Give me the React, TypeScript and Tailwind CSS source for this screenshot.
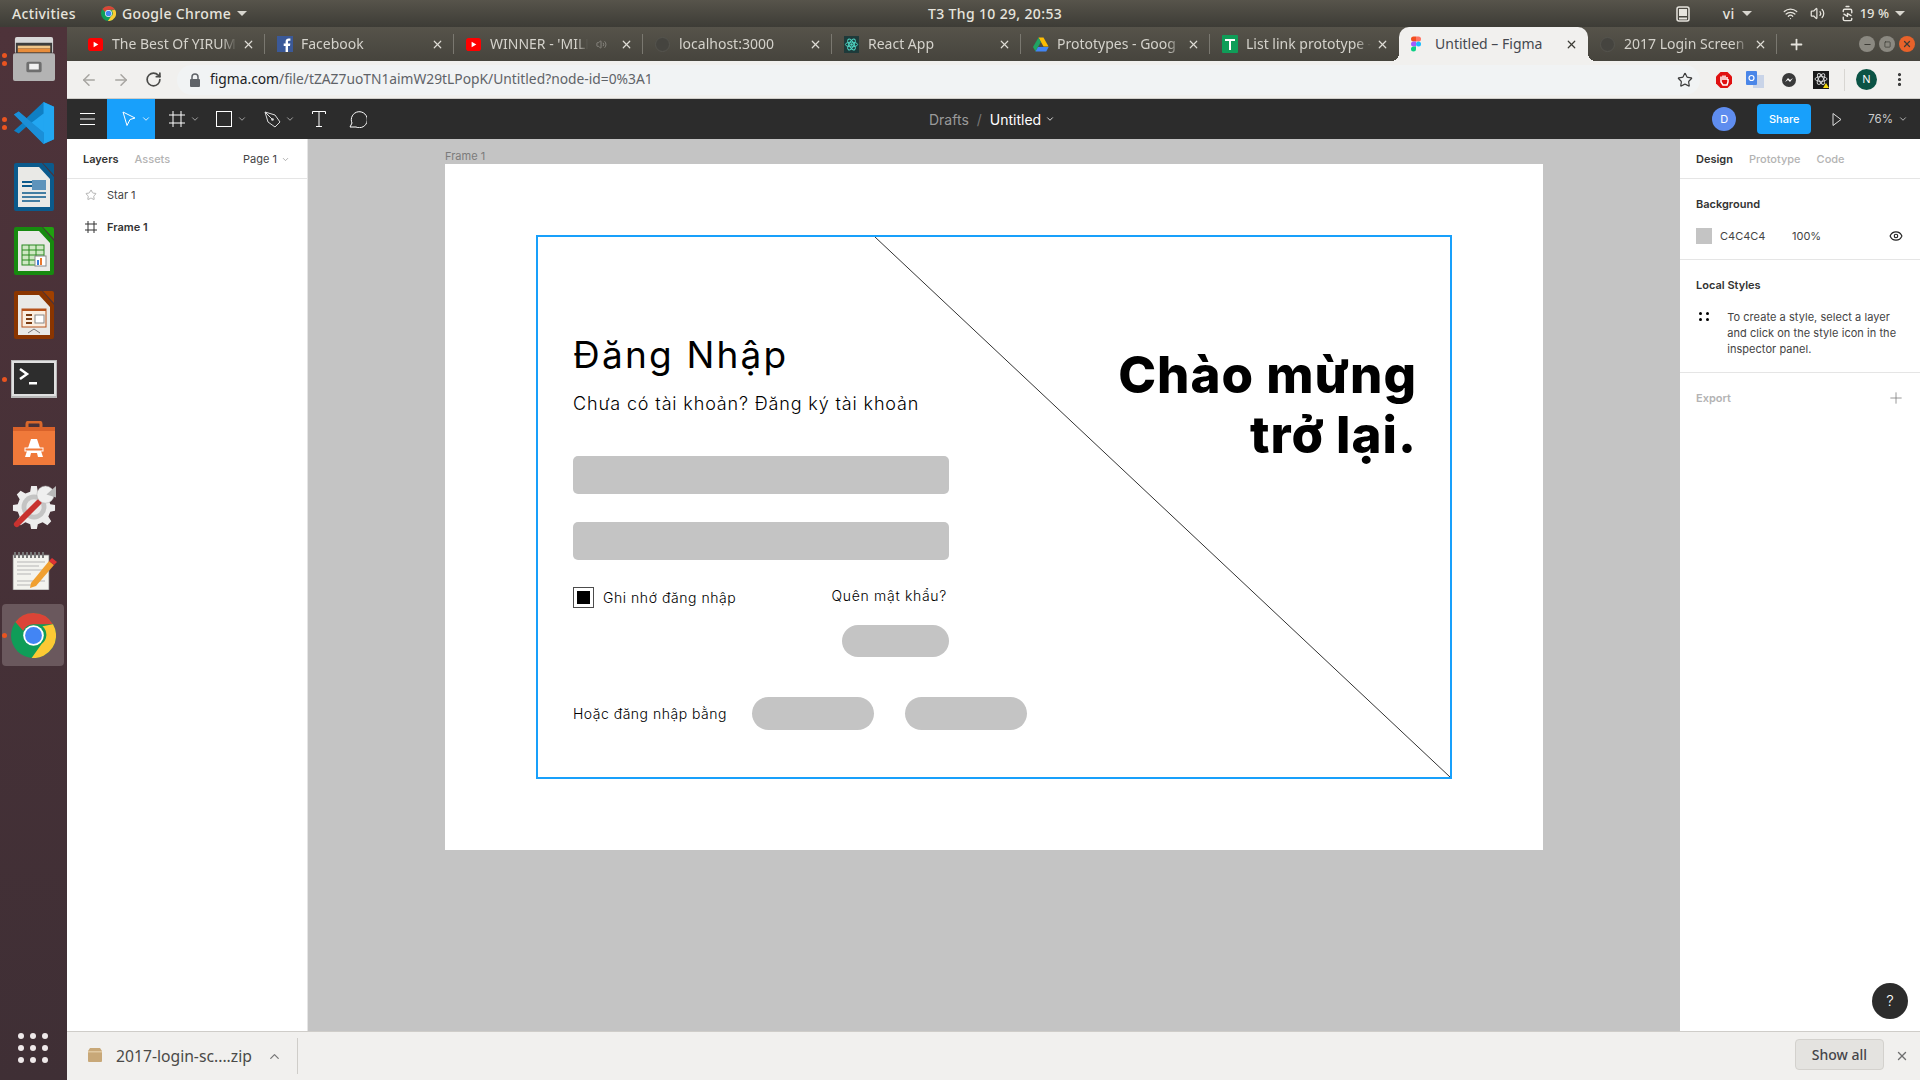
import { ChevronDown, ChevronUp, Eye, Minus, Plus, RotateCw, Star, Volume2, Wifi, X, ArrowLeft, ArrowRight, Square, MoreVertical, BatteryCharging } from 'lucide-react'
import type { ReactNode } from 'react'

const ubuntu = 'font-["Noto_Sans",sans-serif]'

function ChromeLogo({ size = 16 }: { size?: number }) {
  return (
    <svg width={size} height={size} viewBox="0 0 48 48">
      <circle cx="24" cy="24" r="24" fill="#0f9d58" />
      <path d="M24 0a24 24 0 0 1 20.8 12H24a12 12 0 0 0-11 7L4.6 9.6A24 24 0 0 1 24 0z" fill="#db4437" />
      <path d="M44.8 12A24 24 0 0 1 22 48l10.6-15A12 12 0 0 0 33.500 14z" fill="#fcc934" />
      <circle cx="24" cy="24" r="11" fill="#fff" />
      <circle cx="24" cy="24" r="9" fill="#4285f4" />
    </svg>
  )
}

function YouTubeIcon() {
  return (
    <svg width="15" height="15" viewBox="0 0 16 16">
      <rect x="0" y="1" width="16" height="14" rx="3" fill="#f00" />
      <path d="M6 5l5 3-5 3z" fill="#fff" />
    </svg>
  )
}

function FacebookIcon() {
  return (
    <svg width="16" height="16" viewBox="0 0 16 16">
      <rect width="16" height="16" fill="#3b5998" />
      <path d="M11 16V10h2l.3-2.500H11V6c0-.7.3-1.200 1.300-1.200h1.100V2.600C13 2.500 12.400 2.500 11.700 2.500 10 2.500 8.600 3.500 8.600 5.600v1.900H6.700V10h1.900v6z" fill="#fff" />
    </svg>
  )
}

function GhostGlobe() {
  return <span className="block w-[15px] h-[15px] rounded-full bg-[#45443f] border border-[#55544e]" />
}

function ReactFav() {
  return (
    <svg width="15" height="17" viewBox="0 0 16 18">
      <rect width="16" height="18" fill="#1d3a3a" />
      <g fill="none" stroke="#4fd6c4" strokeWidth="1">
        <ellipse cx="8" cy="9" rx="6.500" ry="2.500" />
        <ellipse cx="8" cy="9" rx="6.500" ry="2.500" transform="rotate(60 8 9)" />
        <ellipse cx="8" cy="9" rx="6.500" ry="2.500" transform="rotate(120 8 9)" />
      </g>
      <circle cx="8" cy="9" r="1.300" fill="#4fd6c4" />
    </svg>
  )
}

function DriveIcon() {
  return (
    <svg width="16" height="15" viewBox="0 0 16 14">
      <path d="M5.500 0h5l5 9h-5z" fill="#fbbc04" />
      <path d="M5.500 0L0 9.500 2.500 14l5.300-9.500z" fill="#1fa463" />
      <path d="M2.500 14h10.700l2.500-4.500H5z" fill="#4285f4" />
    </svg>
  )
}

function SheetsIcon() {
  return (
    <svg width="16" height="18" viewBox="0 0 16 18">
      <rect width="16" height="18" rx="1" fill="#0f9d58" />
      <path d="M3 4h10v2H9v9H7V6H3z" fill="#fff" />
    </svg>
  )
}

function FigmaIcon() {
  return (
    <svg width="10" height="16" viewBox="0 0 10 15">
      <path d="M0 2.500A2.500 2.500 0 0 1 2.500 0H5v5H2.500A2.500 2.500 0 0 1 0 2.500z" fill="#f24e1e" />
      <path d="M5 0h2.500a2.500 2.500 0 0 1 0 5H5z" fill="#ff7262" />
      <path d="M0 7.500A2.500 2.500 0 0 1 2.500 5H5v5H2.500A2.500 2.500 0 0 1 0 7.500z" fill="#a259ff" />
      <circle cx="7.500" cy="7.500" r="2.500" fill="#1abcfe" />
      <path d="M0 12.500A2.500 2.500 0 0 1 2.500 10H5v2.500a2.500 2.500 0 0 1-5 0z" fill="#0acf83" />
    </svg>
  )
}

function FileCabinet() {
  return (
    <svg width="42" height="44" viewBox="0 0 44 46">
      <rect x="2" y="0" width="40" height="17" rx="2" fill="#d8d8d8" />
      <rect x="3" y="6" width="38" height="12" fill="#3d3d3d" />
      <rect x="5" y="9" width="34" height="3" fill="#f0c68a" />
      <rect x="5" y="12" width="34" height="4" fill="#e88c3a" />
      <rect x="0" y="17" width="44" height="29" rx="2" fill="#b3b3b3" />
      <rect x="14" y="26" width="16" height="11" rx="2" fill="#6e6e6e" />
      <rect x="17" y="28" width="10" height="6" fill="#f2f2f2" />
    </svg>
  )
}

function VsCode() {
  return (
    <svg width="42" height="42" viewBox="0 0 44 44">
      <path d="M32 0l11 5v34l-11 5L14 26l-8 7-5-3 9-8-9-9 5-3 8 7z" fill="#0f7fc4" />
      <path d="M32 0l11 5v34l-11 5zM32 12L19 22l13 10z" fill="#22a7f2" fillRule="evenodd" />
      <path d="M1 13l5-3 26 22v12L14 26z" fill="#1b8fd8" />
    </svg>
  )
}

function OfficeDoc({ edge, corner, children }: { edge: string; corner: string; children: ReactNode }) {
  return (
    <svg width="40" height="48" viewBox="0 0 40 48">
      <path d="M2 0h26l12 14v32a2 2 0 0 1-2 2H2a2 2 0 0 1-2-2V2a2 2 0 0 1 2-2z" fill={edge} />
      <path d="M29 0h9a2 2 0 0 1 2 2v10z" fill={corner} />
      <path d="M4 4h21l11 12v28H4z" fill="#e9e9e6" />
      {children}
    </svg>
  )
}

function Terminal() {
  return (
    <svg width="46" height="38" viewBox="0 0 46 38">
      <rect width="46" height="38" fill="#b9b9b9" />
      <rect x="1" y="1" width="44" height="35" fill="#e0e0e0" />
      <rect x="3" y="3" width="40" height="31" fill="#2d2d2d" />
      <path d="M9 9l7 5-7 5" fill="none" stroke="#fff" strokeWidth="2.500" />
      <rect x="18" y="22" width="8" height="2.500" fill="#fff" />
    </svg>
  )
}

function StoreBag() {
  return (
    <svg width="42" height="44" viewBox="0 0 42 44">
      <path d="M14 10V3a2 2 0 0 1 2-2h10a2 2 0 0 1 2 2v7" fill="none" stroke="#d9682c" strokeWidth="3" />
      <path d="M0 6h42v38H0z" fill="#f0793a" />
      <path d="M0 6h42v4H0z" fill="#d9622a" />
      <path d="M18 18h6l6 18h-5l-1-4h-6l-1 4h-5z" fill="#fff" />
      <rect x="12" y="27" width="18" height="3" fill="#f0793a" stroke="#fff" />
    </svg>
  )
}

function ToolsIcon() {
  return (
    <svg width="44" height="44" viewBox="0 0 46 46">
      <path d="M20 1h6l1 6 5 2 5-3 4 4-3 5 2 5 5 1v6l-5 1-2 5 3 5-4 4-5-3-5 2-1 5h-6l-1-5-5-2-5 3-4-4 3-5-2-5-5-1v-6l5-1 2-5-3-5 4-4 5 3 5-2z" fill="#ededed" />
      <circle cx="23" cy="23" r="13" fill="#c4c4c4" />
      <circle cx="23" cy="23" r="8" fill="#e8e8e8" />
      <path d="M5 41l23-23" stroke="#c8322f" strokeWidth="6" strokeLinecap="round" />
      <circle cx="35" cy="10" r="9" fill="#efefef" stroke="#aaa" strokeWidth=".5" />
      <path d="M36 10l10-9v12z" fill="#b9b9b9" />
    </svg>
  )
}

function Notepad() {
  return (
    <svg width="46" height="38" viewBox="0 0 46 38">
      <rect x="2" y="3" width="36" height="35" fill="#f3f3ee" stroke="#777" strokeWidth=".7" />
      <path d="M4 0v6M8 0v6M12 0v6M16 0v6M20 0v6M24 0v6M28 0v6M32 0v6" stroke="#777" strokeWidth="2" />
      <path d="M6 10h28M6 14h22M6 18h28M6 22h14M6 29h28M6 33h18" stroke="#b5b5b5" strokeWidth="1" />
      <path d="M20 31L38 9l5 4-18 21-6 2z" fill="#f0a030" />
      <path d="M38 9l3-3 5 4-3 3z" fill="#d33" />
    </svg>
  )
}

function DockItem({ dots = 0, active, children }: { dots?: number; active?: boolean; children: ReactNode }) {
  return (
    <div className="h-[64px] flex items-center justify-center relative">
      {active && <div className="absolute left-[2px] right-[3px] top-[1px] bottom-[1px] rounded bg-[#6a585d]" />}
      {dots > 0 && (
        <div className="absolute left-[2px] top-0 bottom-0 flex flex-col justify-center gap-[3px]">
          {Array.from({ length: dots }).map((_, i) => (
            <span key={i} className="block w-[5px] h-[5px] rounded-full bg-[#e95420]" />
          ))}
        </div>
      )}
      <div className="relative">{children}</div>
    </div>
  )
}

function Dock() {
  return (
    <aside className="w-[67px] shrink-0 flex flex-col pb-[17px] bg-gradient-to-b from-[#4e333a] to-[#3f2f35]">
      <DockItem dots={2}><FileCabinet /></DockItem>
      <DockItem dots={2}><VsCode /></DockItem>
      <DockItem>
        <OfficeDoc edge="#0b5a8c" corner="#0b5a8c">
          <rect x="8" y="18" width="10" height="2" fill="#0b5a8c" />
          <rect x="8" y="22" width="10" height="2" fill="#0b5a8c" />
          <rect x="18" y="17" width="14" height="10" fill="#5d93bb" />
          <path d="M8 30h24M8 34h24M8 38h18" stroke="#0b5a8c" strokeWidth="1.500" />
        </OfficeDoc>
      </DockItem>
      <DockItem>
        <OfficeDoc edge="#178a0f" corner="#20a010">
          <rect x="8" y="18" width="22" height="20" fill="#cfe8c4" stroke="#2a8a20" />
          <path d="M8 23h22M8 28h22M8 33h22M15 18v20M22 18v20" stroke="#2a8a20" />
          <rect x="21" y="29" width="11" height="10" fill="#fff" stroke="#888" />
          <rect x="23" y="33" width="2" height="5" fill="#3b7dd8" />
          <rect x="26" y="31" width="2" height="7" fill="#e8772e" />
        </OfficeDoc>
      </DockItem>
      <DockItem>
        <OfficeDoc edge="#8a3500" corner="#a04000">
          <rect x="8" y="18" width="24" height="18" fill="#fbeee0" stroke="#b5521a" />
          <rect x="8" y="18" width="24" height="2" fill="#b5521a" />
          <path d="M12 24h6M12 28h6M12 32h6" stroke="#7a3a10" strokeWidth="2" />
          <rect x="21" y="24" width="9" height="8" fill="#fff" stroke="#888" />
          <path d="M14 42l6-4 6 4" fill="none" stroke="#777" />
        </OfficeDoc>
      </DockItem>
      <DockItem dots={1}><Terminal /></DockItem>
      <DockItem><StoreBag /></DockItem>
      <DockItem><ToolsIcon /></DockItem>
      <DockItem><Notepad /></DockItem>
      <DockItem dots={1} active><ChromeLogo size={45} /></DockItem>
      <div className="mt-auto ml-[18px] w-[30px] grid grid-cols-3 gap-x-[6px] gap-y-[6px]">
        {Array.from({ length: 9 }).map((_, i) => (
          <span key={i} className="block w-[6px] h-[6px] rounded-full bg-[#efe9ea]" />
        ))}
      </div>
    </aside>
  )
}

function TopBar() {
  return (
    <header className={`h-[27px] shrink-0 flex items-center bg-gradient-to-b from-[#57544b] to-[#3d3c36] text-[#e6e4dd] text-[14px] font-medium tracking-[0.35px] ${ubuntu}`}>
      <span className="ml-[12px] w-[89px]">Activities</span>
      <ChromeLogo size={15} />
      <span className="ml-[6px]">Google Chrome</span>
      <span className="ml-[6px] border-x-[5px] border-x-transparent border-t-[5px] border-t-[#d8d6cf]" />
      <span className="absolute left-[928px]">T3 Thg 10 29, 20:53</span>
      <div className="ml-auto flex items-center">
        <svg width="14" height="16" viewBox="0 0 14 16">
          <rect x="1" y="1" width="12" height="14" rx="2" fill="none" stroke="#e6e4dd" strokeWidth="1.500" />
          <rect x="3" y="3" width="8" height="7" fill="#e6e4dd" />
          <rect x="3" y="11.500" width="8" height="2" fill="#e6e4dd" />
        </svg>
        <span className="ml-[33px]">vi</span>
        <span className="ml-[7px] border-x-[5px] border-x-transparent border-t-[5px] border-t-[#d8d6cf]" />
        <Wifi size={15} className="ml-[31px]" />
        <Volume2 size={15} className="ml-[12px]" />
        <BatteryCharging size={17} className="ml-[14px] -rotate-90" />
        <span className="ml-[4px] text-[13px] tracking-normal">19 %</span>
        <span className="ml-[6px] mr-[15px] border-x-[5px] border-x-transparent border-t-[5px] border-t-[#d8d6cf]" />
      </div>
    </header>
  )
}

const tabs: { title: string; icon: ReactNode; muted?: boolean; active?: boolean }[] = [
  { title: 'The Best Of YIRUM', icon: <YouTubeIcon /> },
  { title: 'Facebook', icon: <FacebookIcon /> },
  { title: "WINNER - 'MILL", icon: <YouTubeIcon />, muted: true },
  { title: 'localhost:3000', icon: <GhostGlobe /> },
  { title: 'React App', icon: <ReactFav /> },
  { title: 'Prototypes - Goog', icon: <DriveIcon /> },
  { title: 'List link prototype -', icon: <SheetsIcon /> },
  { title: 'Untitled – Figma', icon: <FigmaIcon />, active: true },
  { title: '2017 Login Screen', icon: <GhostGlobe /> },
]

function Tab({ title, icon, muted, active }: (typeof tabs)[number]) {
  const fade = active ? '' : '[mask-image:linear-gradient(to_right,black_88%,transparent)]'
  return (
    <div className={`w-[189px] h-full flex items-center pl-[12px] pr-[10px] relative ${active ? "bg-[#f1f0ee] rounded-t-[10px] text-[#45484f] before:content-[''] before:absolute before:-left-[8px] before:bottom-0 before:w-[8px] before:h-[8px] before:bg-[radial-gradient(circle_at_0_0,transparent_8px,#f1f0ee_8px)] after:content-[''] after:absolute after:-right-[8px] after:bottom-0 after:w-[8px] after:h-[8px] after:bg-[radial-gradient(circle_at_100%_0,transparent_8px,#f1f0ee_8px)]" : 'text-[#d4d2cb]'}`}>
      <span className="w-[24px] shrink-0 flex items-center">{icon}</span>
      <span className={`flex-1 min-w-0 -mt-[2px] overflow-hidden whitespace-nowrap text-[14px] ${fade}`}>{title}</span>
      {muted && <Volume2 size={11} className="mx-[8px] text-[#8c8a83]" />}
      <X size={13} strokeWidth={2.2} className={`shrink-0 ml-[5px] ${active ? 'text-[#3d3c36]' : 'text-[#dedcd5]'}`} />
    </div>
  )
}

function TabStrip() {
  return (
    <div className={`h-[34px] shrink-0 flex items-end pl-[9px] bg-gradient-to-b from-[#56534a] to-[#46443d] ${ubuntu}`}>
      {tabs.map((t, i) => (
        <div key={t.title} className="flex items-center h-full">
          <Tab {...t} />
          {i < tabs.length - 1 && !t.active && !tabs[i + 1].active && <span className="block w-px h-[20px] -ml-px bg-[#7a7870]" />}
        </div>
      ))}
      <span className="block w-px h-[20px] self-center -ml-px bg-[#7a7870]" />
      <Plus size={17} strokeWidth={2.5} className="self-center ml-[11px] text-[#e6e4dd]" />
      <div className="self-center ml-auto mr-[5px] flex items-center gap-[4px]">
        <span className="w-[16px] h-[16px] rounded-full bg-[#8b8981] flex items-center justify-center text-[#3d3c36]"><Minus size={9} strokeWidth={3} /></span>
        <span className="w-[16px] h-[16px] rounded-full bg-[#8b8981] flex items-center justify-center text-[#3d3c36]"><Square size={7} strokeWidth={2.5} /></span>
        <span className="w-[16px] h-[16px] rounded-full bg-[#e8622a] flex items-center justify-center text-[#3d3c36]"><X size={10} strokeWidth={3} /></span>
      </div>
    </div>
  )
}

function AddressBar() {
  return (
    <div className={`h-[38px] shrink-0 flex items-center bg-[#f1f0ee] border-b border-[#cfcdc9] ${ubuntu}`}>
      <ArrowLeft size={18} strokeWidth={2} className="ml-[13px] text-[#a7a5a1]" />
      <ArrowRight size={18} strokeWidth={2} className="ml-[14px] text-[#a7a5a1]" />
      <RotateCw size={17} strokeWidth={2.4} className="ml-[15px] text-[#4a4a48]" />
      <div className="ml-[15px] w-[1523px] h-[30px] rounded-full bg-[#f1f3f4] flex items-center pl-[12px]">
        <svg width="12" height="14" viewBox="0 0 12 14">
          <path d="M3 6V4a3 3 0 0 1 6 0v2" fill="none" stroke="#5f6368" strokeWidth="1.500" />
          <rect x="1" y="6" width="10" height="8" rx="1" fill="#5f6368" />
        </svg>
        <span className="ml-[9px] text-[13.800px] text-[#202124] whitespace-nowrap">figma.com<span className="text-[#5f6368]">/file/tZAZ7uoTN1aimW29tLPopK/Untitled?node-id=0%3A1</span></span>
        <Star size={16} strokeWidth={1.8} className="ml-auto mr-[7px] text-[#3c3c3c]" />
      </div>
      <svg width="18" height="18" viewBox="0 0 18 18" className="ml-[15px]">
        <path d="M5.500 1h7L17 5.500v7L12.500 17h-7L1 12.500v-7z" fill="#e01010" />
        <path d="M6 9V5.500M8 9V4.500M10 9V4.500M12 9V6M6 8v3l2 3h4l1-3V8" stroke="#fff" strokeWidth="1.500" fill="none" />
      </svg>
      <svg width="18" height="18" viewBox="0 0 18 18" className="ml-[13px]">
        <rect x="7" y="4" width="11" height="13" fill="#c9d4e8" />
        <rect x="0" y="0" width="11" height="14" rx="1" fill="#4a86e8" />
        <circle cx="5.500" cy="7" r="2.500" fill="none" stroke="#fff" strokeWidth="1.200" />
      </svg>
      <svg width="16" height="16" viewBox="0 0 16 16" className="ml-[17px]">
        <circle cx="8" cy="8" r="7" fill="#3a3a3a" />
        <path d="M4 10l3-4 2 2 3-2-3 4-2-2z" fill="#fff" />
      </svg>
      <svg width="16" height="18" viewBox="0 0 16 18" className="ml-[16px]">
        <rect width="16" height="18" fill="#1a1a1a" />
        <g fill="none" stroke="#ddd" strokeWidth=".9">
          <ellipse cx="8" cy="8" rx="6" ry="2.400" />
          <ellipse cx="8" cy="8" rx="6" ry="2.400" transform="rotate(60 8 8)" />
          <ellipse cx="8" cy="8" rx="6" ry="2.400" transform="rotate(120 8 8)" />
        </g>
        <path d="M10 17l3-5 3 5z" fill="#f5d90a" />
      </svg>
      <span className="ml-[15px] w-px h-[22px] bg-[#d8d6d2]" />
      <span className="ml-[11px] w-[21px] h-[21px] rounded-full bg-[#0b5345] text-white text-[11px] flex items-center justify-center">N</span>
      <MoreVertical size={17} strokeWidth={2.5} className="ml-[14px] text-[#333]" />
    </div>
  )
}

function Caret() {
  return <ChevronDown size={10} strokeWidth={2} />
}

function FigmaToolbar() {
  return (
    <div className="h-[40px] shrink-0 flex items-center bg-[#2c2c2c] text-white font-['Inter',sans-serif] relative">
      <svg width="15" height="12" viewBox="0 0 15 12" className="ml-[13px]">
        <path d="M0 .5h15M0 6h15M0 11.500h15" stroke="#fff" />
      </svg>
      <div className="ml-[12px] w-[48px] h-full bg-[#18a0fb] flex items-center pl-[15px] gap-[5px]">
        <svg width="14" height="16" viewBox="0 0 14 16"><path d="M1 1l12 6-5 1.500-3 6z" fill="none" stroke="#fff" /></svg>
        <Caret />
      </div>
      <svg width="16" height="16" viewBox="0 0 16 16" className="ml-[14px]"><path d="M4 0v16M12 0v16M0 4h16M0 12h16" stroke="#fff" fill="none" /></svg>
      <span className="ml-[5px] text-[#bbb]"><Caret /></span>
      <span className="ml-[16px] block w-[16px] h-[16px] border border-white" />
      <span className="ml-[5px] text-[#bbb]"><Caret /></span>
      <svg width="17" height="17" viewBox="0 0 17 17" className="ml-[17px]">
        <path d="M1 1l10 3 5 7-5 5-7-5zM1 1l7 7" fill="none" stroke="#ddd" />
        <circle cx="8.500" cy="8.500" r="1.300" fill="#ddd" />
      </svg>
      <span className="ml-[4px] text-[#bbb]"><Caret /></span>
      <svg width="14" height="16" viewBox="0 0 14 16" className="ml-[17px]"><path d="M.5 3V.5h13V3M7 .5v15M4 15.500h6" fill="none" stroke="#fff" /></svg>
      <svg width="18" height="18" viewBox="0 0 18 18" className="ml-[23px]">
        <path d="M1 17l2-4A8 8 0 1 1 7 17z" fill="none" stroke="#fff" />
      </svg>
      <div className="absolute left-[862px] flex items-center text-[14px]">
        <span className="text-[#9a9a9a]">Drafts</span>
        <span className="mx-[8px] text-[#777]">/</span>
        <span>Untitled</span>
        <span className="ml-[4px]"><Caret /></span>
      </div>
      <span className="ml-auto w-[24px] h-[24px] rounded-full bg-[#5f8def] text-[11px] flex items-center justify-center">D</span>
      <span className="ml-[21px] w-[54px] h-[30px] rounded bg-[#18a0fb] text-[11px] font-medium flex items-center justify-center">Share</span>
      <svg width="10" height="13" viewBox="0 0 10 13" className="ml-[21px]"><path d="M1 .5l8 6-8 6z" fill="none" stroke="#ddd" /></svg>
      <span className="ml-[26px] pt-[2px] text-[11.500px] text-[#ccc]">76%</span>
      <span className="ml-[5px] mr-[12px] text-[#ccc]"><Caret /></span>
    </div>
  )
}

function LeftPanel() {
  return (
    <aside className="w-[241px] shrink-0 bg-white border-r border-[#e5e5e5] font-['Inter',sans-serif] text-[11px]">
      <div className="h-[40px] flex items-center pl-[16px] pr-[17px] pt-[2px] border-b border-[#e5e5e5]">
        <span className="font-semibold text-[#333]">Layers</span>
        <span className="ml-[16px] font-medium text-[#b3b3b3]">Assets</span>
        <span className="ml-auto text-[#444]">Page 1</span>
        <ChevronDown size={9} className="ml-[4px] text-[#999]" />
      </div>
      <div className="h-[32px] flex items-center pl-[18px]">
        <Star size={12} className="text-[#b3b3b3]" />
        <span className="ml-[10px] text-[#444]">Star 1</span>
      </div>
      <div className="h-[32px] flex items-center pl-[18px]">
        <svg width="12" height="12" viewBox="0 0 12 12"><path d="M3 0v12M9 0v12M0 3h12M0 9h12" stroke="#333" fill="none" /></svg>
        <span className="ml-[10px] font-semibold text-[#333]">Frame 1</span>
      </div>
    </aside>
  )
}

function Pill({ className }: { className: string }) {
  return <div className={`rounded-full bg-[#c4c4c4] ${className}`} />
}

function Canvas() {
  return (
    <main className="flex-1 min-w-0 bg-[#c4c4c4] pl-[137px] pt-[10px] relative overflow-hidden">
      <div className="h-[15px] text-[11px] leading-[15px] text-[#7b7b7b] font-['Inter',sans-serif]">Frame 1</div>
      <div className="w-[1098px] h-[686px] bg-white pl-[91px] pt-[71px]">
        <div className="w-[916px] h-[544px] border-2 border-[#18a0fb] relative flex justify-between font-['Inter',sans-serif] text-black">
          <svg className="absolute left-0 top-0 w-full h-full" width="912" height="540">
            <line x1="337" y1="0" x2="912" y2="540" stroke="#333" strokeWidth="1" />
          </svg>
          <div className="pl-[35px] pt-[95px] w-[500px]">
            <h1 className="text-[37px] leading-[46px] tracking-[2.200px] font-normal">Đăng Nhập</h1>
            <p className="mt-[14px] text-[18px] leading-[24px] tracking-[0.850px] font-light">Chưa có tài khoản? Đăng ký tài khoản</p>
            <div className="mt-[40px] w-[376px] h-[38px] rounded-[5px] bg-[#c4c4c4]" />
            <div className="mt-[28px] w-[376px] h-[38px] rounded-[5px] bg-[#c4c4c4]" />
            <div className="mt-[26px] w-[376px] flex items-start justify-between">
              <div className="flex items-center">
                <span className="w-[21px] h-[21px] border border-black/70 flex items-center justify-center">
                  <span className="block w-[13px] h-[13px] bg-black" />
                </span>
                <span className="ml-[9px] pt-[1px] text-[14px] leading-[22px] font-light tracking-[0.550px]">Ghi nhớ đăng nhập</span>
              </div>
              <span className="pt-[1px] pr-[2px] text-[14px] leading-[18px] font-light tracking-[0.700px]">Quên mật khẩu?</span>
            </div>
            <div className="mt-[16px] w-[376px] flex justify-end">
              <Pill className="w-[107px] h-[32px]" />
            </div>
            <div className="mt-[40px] flex items-center">
              <span className="w-[179px] text-[14px] leading-[20px] font-light tracking-[0.500px] whitespace-nowrap">Hoặc đăng nhập bằng</span>
              <Pill className="w-[122px] h-[33px]" />
              <Pill className="ml-[31px] w-[122px] h-[33px]" />
            </div>
          </div>
          <div className="pr-[33px] pt-[108px] text-right text-[51px] leading-[60px] font-extrabold tracking-[1px] relative">
            <div>Chào mừng</div>
            <div>trở lại.</div>
          </div>
        </div>
      </div>
    </main>
  )
}

function RightPanel() {
  return (
    <aside className="w-[240px] shrink-0 bg-white font-['Inter',sans-serif] text-[11px] relative">
      <div className="h-[40px] flex items-center pl-[16px] pt-[2px] border-b border-[#e5e5e5] gap-[16px]">
        <span className="font-semibold text-[#333]">Design</span>
        <span className="font-medium text-[#b3b3b3]">Prototype</span>
        <span className="font-medium text-[#b3b3b3]">Code</span>
      </div>
      <div className="h-[81px] border-b border-[#e5e5e5] px-[16px] pt-[17px]">
        <div className="font-semibold text-[#333] leading-[16px]">Background</div>
        <div className="mt-[16px] flex items-center text-[#444]">
          <span className="w-[16px] h-[16px] bg-[#c4c4c4]" />
          <span className="ml-[8px] w-[72px]">C4C4C4</span>
          <span>100%</span>
          <Eye size={14} className="ml-auto mr-[1px] text-[#222]" />
        </div>
      </div>
      <div className="h-[113px] border-b border-[#e5e5e5] px-[16px] pt-[17px]">
        <div className="font-semibold text-[#333] leading-[16px]">Local Styles</div>
        <div className="mt-[16px] flex">
          <div className="w-[32px] pt-[3px] pl-[3px]">
            <div className="grid grid-cols-2 w-[10px] gap-x-[4px] gap-y-[3px]">
              <span className="w-[3px] h-[3px] rounded-full bg-black" />
              <span className="w-[3px] h-[3px] rounded-full bg-black" />
              <span className="w-[3px] h-[3px] rounded-full bg-black" />
              <span className="w-[3px] h-[3px] rounded-full bg-black" />
            </div>
          </div>
          <p className="leading-[16px] text-[#444] w-[182px] tracking-[0.050px]">To create a style, select a layer and click on the style icon in the inspector panel.</p>
        </div>
      </div>
      <div className="h-[50px] flex items-center justify-between pl-[16px] pr-[15px]">
        <span className="font-semibold text-[#b3b3b3]">Export</span>
        <Plus size={18} strokeWidth={1} className="text-[#777]" />
      </div>
      <span className="absolute right-[12px] bottom-[12px] w-[36px] h-[36px] rounded-full bg-[#2c2c2c] text-white text-[15px] font-light flex items-center justify-center">?</span>
    </aside>
  )
}

function DownloadBar() {
  return (
    <div className={`h-[49px] shrink-0 flex items-center bg-[#f1f0ee] border-t border-[#cfcdc9] ${ubuntu}`}>
      <svg width="16" height="14" viewBox="0 0 16 14" className="ml-[20px] -mt-[3px]">
        <path d="M1 3l2-3h10l2 3v10a1 1 0 0 1-1 1H2a1 1 0 0 1-1-1z" fill="#c8a878" />
        <path d="M1 3h14v1.500H1z" fill="#e0c8a0" />
      </svg>
      <span className="ml-[13px] pt-[2px] w-[151px] text-[15.700px] text-[#4a4a48] whitespace-nowrap">2017-login-sc....zip</span>
      <ChevronUp size={15} className="text-[#777]" />
      <span className="ml-[15px] w-px h-[36px] bg-[#cfcdc9]" />
      <div className="ml-auto -mt-[3px] w-[89px] h-[31px] rounded border border-[#d3d1cd] bg-[#e4e3e0] text-[14px] font-medium text-[#45454a] flex items-center justify-center">Show all</div>
      <X size={14} strokeWidth={2.4} className="ml-[11px] mr-[11px] text-[#6f6f6f]" />
    </div>
  )
}

export default function App() {
  return (
    <div className="w-[1920px] h-[1080px] overflow-hidden flex flex-col relative">
      <TopBar />
      <div className="flex-1 min-h-0 flex">
        <Dock />
        <div className="flex-1 min-w-0 flex flex-col">
          <TabStrip />
          <AddressBar />
          <FigmaToolbar />
          <div className="flex-1 min-h-0 flex">
            <LeftPanel />
            <Canvas />
            <RightPanel />
          </div>
          <DownloadBar />
        </div>
      </div>
    </div>
  )
}
